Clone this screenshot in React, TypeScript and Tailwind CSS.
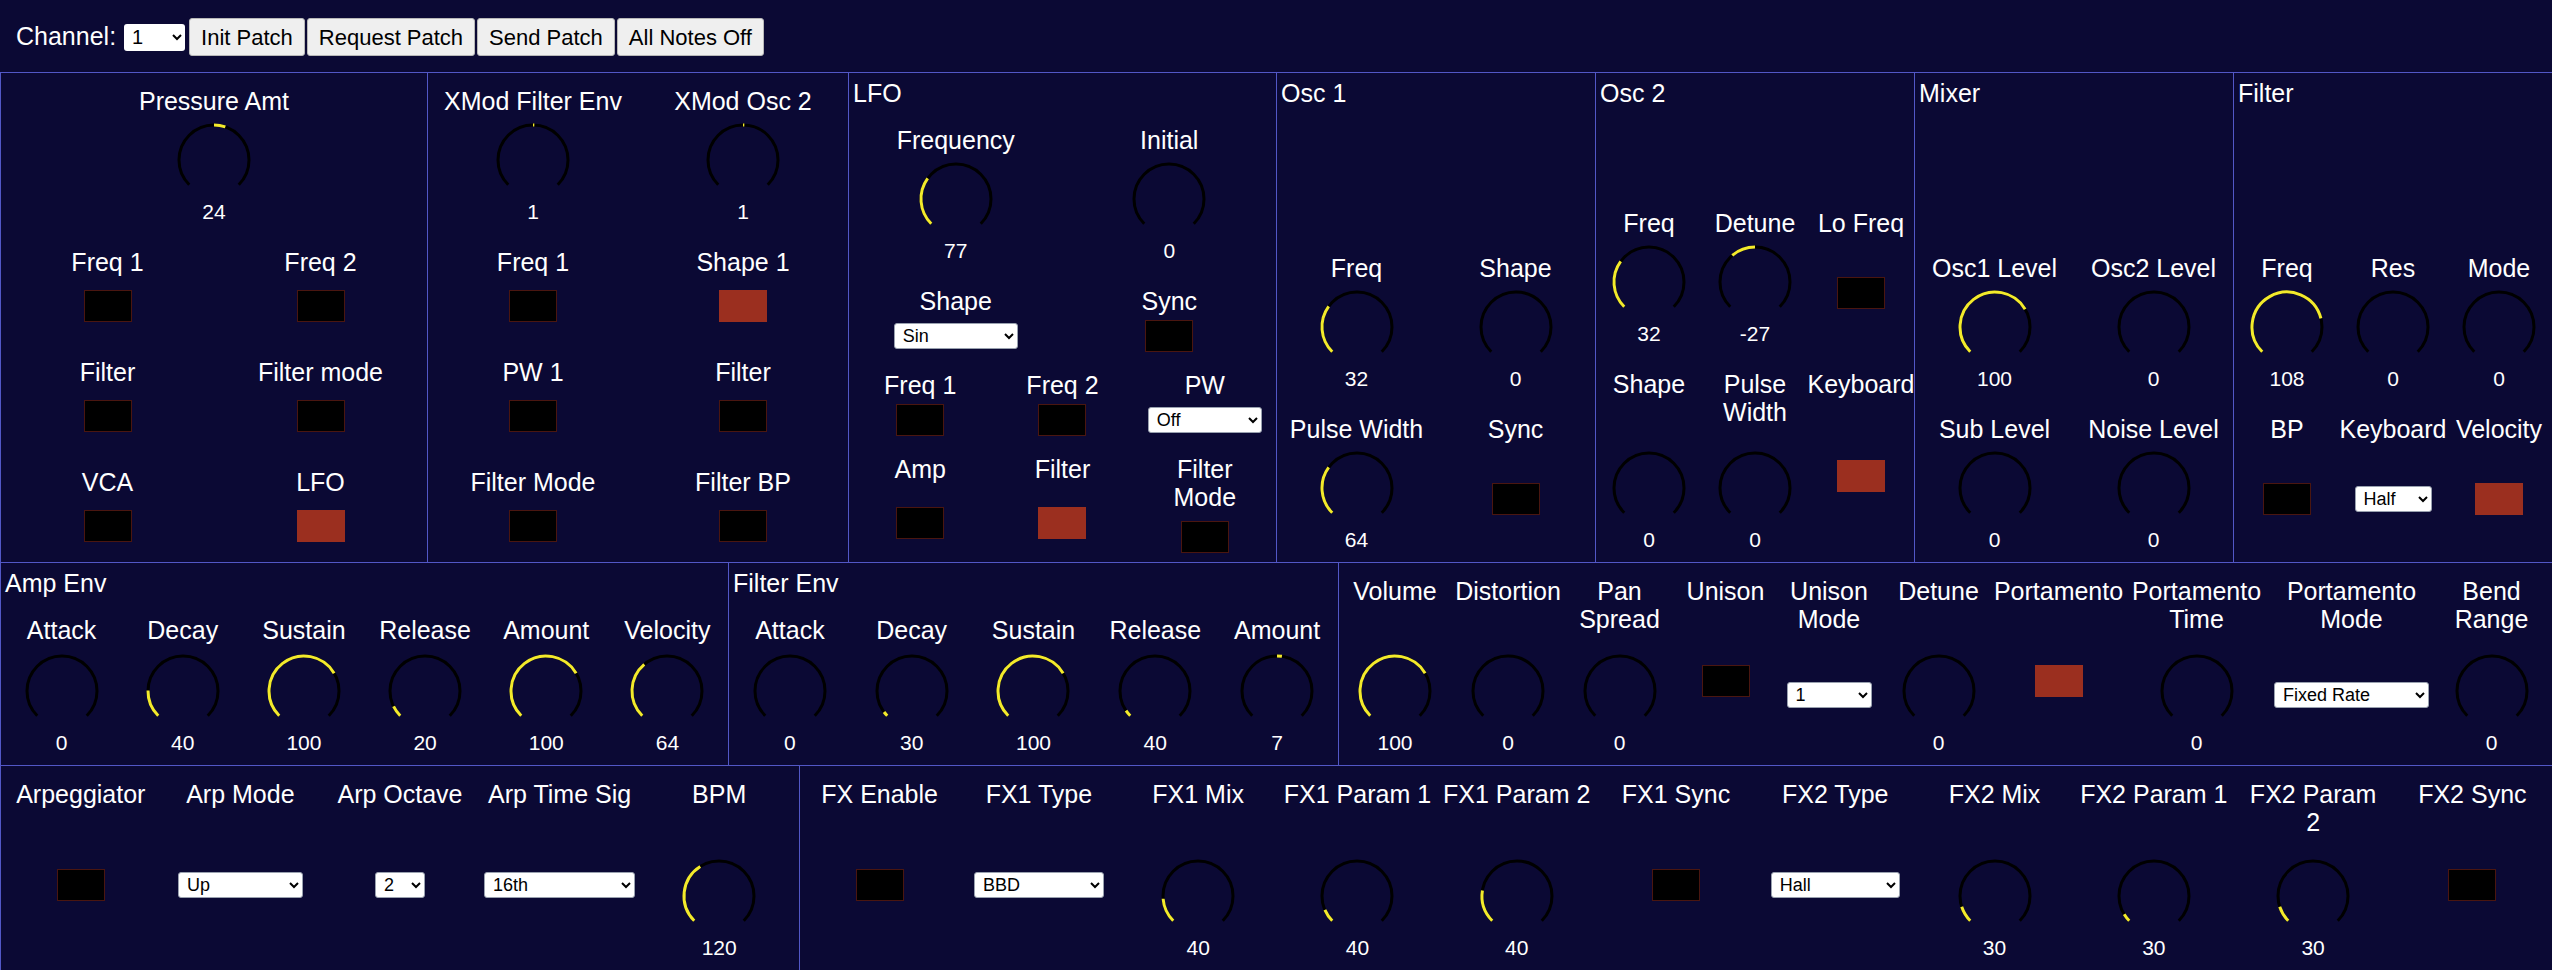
import React from "react";

type Item =
  | { t: "k"; l: string[]; v: number; f: number; bi?: boolean }
  | { t: "t"; l: string[]; on?: boolean }
  | { t: "s"; l: string[]; v: string; w: string };

interface Row { cls: string; items: Item[] }
interface Section { w: string; title?: string; bottom?: boolean; rows: Row[] }

const k = (l: string, v: number, f: number, bi = false): Item => ({ t: "k", l: l.split("|"), v, f, bi });
const tg = (l: string, on = false): Item => ({ t: "t", l: l.split("|"), on });
const sel = (l: string, v: string, w: string): Item => ({ t: "s", l: l.split("|"), v, w });

const YEL = "#f3ea2c";

function arc(a0: number, a1: number) {
  const cx = 40, cy = 38, r = 35;
  const p = (a: number) => {
    const rad = (a * Math.PI) / 180;
    return `${(cx + r * Math.sin(rad)).toFixed(2)} ${(cy - r * Math.cos(rad)).toFixed(2)}`;
  };
  const large = Math.abs(a1 - a0) > 180 ? 1 : 0;
  const sweep = a1 > a0 ? 1 : 0;
  return `M ${p(a0)} A ${r} ${r} 0 ${large} ${sweep} ${p(a1)}`;
}

function Knob({ f, bi }: { f: number; bi?: boolean }) {
  const a0 = bi ? 0 : -135;
  const a1 = a0 + f * 270;
  return (
    <svg width="80" height="68" viewBox="0 0 80 68">
      <path d={arc(-135, 135)} fill="none" stroke="#000" strokeWidth="3" />
      {Math.abs(a1 - a0) > 0.5 && <path d={arc(a0, a1)} fill="none" stroke={YEL} strokeWidth="3" />}
    </svg>
  );
}

function Toggle({ on }: { on?: boolean }) {
  return <div className={`w-[48px] h-[32px] border ${on ? "bg-[#9b2f1f] border-[#9b2f1f]" : "bg-black border-[#4a1610]"}`} />;
}

function Sel({ v, w }: { v: string; w: string }) {
  return (
    <select defaultValue={v} className={`${w} h-[26px] bg-white text-black text-[18px] leading-none rounded-[3px] border border-gray-400 px-1`}>
      <option>{v}</option>
    </select>
  );
}

function Cell({ it }: { it: Item }) {
  return (
    <div className="flex flex-col items-center pt-[14px] pb-[8px] min-w-0">
      {it.l.map((x, i) => (
        <div key={i} className="text-[25px] leading-[28px] whitespace-nowrap">{x}</div>
      ))}
      {it.t === "k" ? (
        <div className="flex-1 flex flex-col items-center justify-end">
          <Knob f={it.f} bi={it.bi} />
          <div className="text-[21px] leading-[28px] mt-[8px]">{it.v}</div>
        </div>
      ) : (
        <div className="flex-1 flex flex-col items-center justify-center">
          {it.t === "t" ? <Toggle on={it.on} /> : <Sel v={it.v} w={it.w} />}
        </div>
      )}
    </div>
  );
}

const ROW1: Section[] = [
  { w: "w-[427px]", rows: [
    { cls: "grid-cols-1 h-[161px]", items: [k("Pressure Amt", 24, 0.07, true)] },
    { cls: "grid-cols-2 h-[110px]", items: [tg("Freq 1"), tg("Freq 2")] },
    { cls: "grid-cols-2 h-[110px]", items: [tg("Filter"), tg("Filter mode")] },
    { cls: "grid-cols-2 h-[109px]", items: [tg("VCA"), tg("LFO", true)] },
  ] },
  { w: "w-[421px]", rows: [
    { cls: "grid-cols-2 h-[161px]", items: [k("XMod Filter Env", 1, 0.008, true), k("XMod Osc 2", 1, 0.008, true)] },
    { cls: "grid-cols-2 h-[110px]", items: [tg("Freq 1"), tg("Shape 1", true)] },
    { cls: "grid-cols-2 h-[110px]", items: [tg("PW 1"), tg("Filter")] },
    { cls: "grid-cols-2 h-[109px]", items: [tg("Filter Mode"), tg("Filter BP")] },
  ] },
  { w: "w-[428px]", title: "LFO", rows: [
    { cls: "grid-cols-2 h-[161px]", items: [k("Frequency", 77, 0.3), k("Initial", 0, 0)] },
    { cls: "grid-cols-2 h-[84px] [&>div]:pb-0", items: [sel("Shape", "Sin", "w-[124px]"), tg("Sync")] },
    { cls: "grid-cols-3 h-[84px] [&>div]:pb-0", items: [tg("Freq 1"), tg("Freq 2"), sel("PW", "Off", "w-[114px]")] },
    { cls: "grid-cols-3 h-[122px] [&>div]:pb-0", items: [tg("Amp"), tg("Filter", true), tg("Filter|Mode")] },
  ] },
  { w: "w-[319px]", title: "Osc 1", bottom: true, rows: [
    { cls: "grid-cols-2 h-[161px]", items: [k("Freq", 32, 0.3), k("Shape", 0, 0)] },
    { cls: "grid-cols-2 h-[161px]", items: [k("Pulse Width", 64, 0.3), tg("Sync")] },
  ] },
  { w: "w-[319px]", title: "Osc 2", bottom: true, rows: [
    { cls: "grid-cols-3 h-[161px]", items: [k("Freq", 32, 0.3), k("Detune", -27, -0.15, true), tg("Lo Freq")] },
    { cls: "grid-cols-3 h-[206px]", items: [k("Shape", 0, 0), k("Pulse|Width", 0, 0), tg("Keyboard", true)] },
  ] },
  { w: "w-[319px]", title: "Mixer", bottom: true, rows: [
    { cls: "grid-cols-2 h-[161px]", items: [k("Osc1 Level", 100, 0.72), k("Osc2 Level", 0, 0)] },
    { cls: "grid-cols-2 h-[161px]", items: [k("Sub Level", 0, 0), k("Noise Level", 0, 0)] },
  ] },
  { w: "w-[319px]", title: "Filter", bottom: true, rows: [
    { cls: "grid-cols-3 h-[161px]", items: [k("Freq", 108, 0.78), k("Res", 0, 0), k("Mode", 0, 0)] },
    { cls: "grid-cols-3 h-[161px]", items: [tg("BP"), sel("Keyboard", "Half", "w-[77px]"), tg("Velocity", true)] },
  ] },
];

const ROW2: Section[] = [
  { w: "w-[728px]", title: "Amp Env", rows: [
    { cls: "grid-cols-6 h-[163px]", items: [k("Attack", 0, 0), k("Decay", 40, 0.17), k("Sustain", 100, 0.72), k("Release", 20, 0.07), k("Amount", 100, 0.72), k("Velocity", 64, 0.35)] },
  ] },
  { w: "w-[610px]", title: "Filter Env", rows: [
    { cls: "grid-cols-5 h-[163px]", items: [k("Attack", 0, 0), k("Decay", 30, 0.03), k("Sustain", 100, 0.72), k("Release", 40, 0.04), k("Amount", 7, 0.03, true)] },
  ] },
  { w: "w-[1214px]", rows: [
    { cls: "grid-cols-[112px_114px_109px_103px_104px_115px_125px_151px_159px_121px] h-[202px]", items: [
      k("Volume", 100, 0.72), k("Distortion", 0, 0), k("Pan|Spread", 0, 0), tg("Unison"), sel("Unison|Mode", "1", "w-[85px]"),
      k("Detune", 0, 0), tg("Portamento", true), k("Portamento|Time", 0, 0), sel("Portamento|Mode", "Fixed Rate", "w-[155px]"), k("Bend|Range", 0, 0),
    ] },
  ] },
];

const ROW3: Section[] = [
  { w: "w-[799px]", rows: [
    { cls: "grid-cols-5 h-[204px]", items: [tg("Arpeggiator"), sel("Arp Mode", "Up", "w-[125px]"), sel("Arp Octave", "2", "w-[50px]"), sel("Arp Time Sig", "16th", "w-[151px]"), k("BPM", 120, 0.38)] },
  ] },
  { w: "w-[1753px]", rows: [
    { cls: "grid-cols-11 h-[204px]", items: [
      tg("FX Enable"), sel("FX1 Type", "BBD", "w-[130px]"), k("FX1 Mix", 40, 0.15), k("FX1 Param 1", 40, 0.08), k("FX1 Param 2", 40, 0.2),
      tg("FX1 Sync"), sel("FX2 Type", "Hall", "w-[129px]"), k("FX2 Mix", 30, 0.1), k("FX2 Param 1", 30, 0.05), k("FX2 Param|2", 30, 0.1), tg("FX2 Sync"),
    ] },
  ] },
];

function Sec({ s }: { s: Section }) {
  return (
    <div className={`${s.w} shrink-0 flex flex-col border-r border-b border-[#5257c6]`}>
      {s.title && <div className="h-[39px] shrink-0 pl-[4px] pt-[6px] text-[25px] leading-[28px]">{s.title}</div>}
      <div className={s.bottom ? "mt-auto" : ""}>
        {s.rows.map((r, i) => (
          <div key={i} className={`grid ${r.cls}`}>
            {r.items.map((it, j) => <Cell key={j} it={it} />)}
          </div>
        ))}
      </div>
    </div>
  );
}

export default function App() {
  return (
    <div className="w-[2552px] h-[970px] overflow-hidden bg-[#0b0934] text-white" style={{ fontFamily: "'Liberation Sans', Arial, sans-serif" }}>
      <div className="h-[72px] flex items-center pl-[16px] gap-[2px] pt-[2px]">
        <span className="text-[25px] mr-[6px]">Channel:</span>
        <select defaultValue="1" className="w-[61px] h-[27px] bg-white text-black text-[20px] rounded-[3px] px-1 mr-[2px]">
          <option>1</option>
        </select>
        {["Init Patch", "Request Patch", "Send Patch", "All Notes Off"].map(b => (
          <button key={b} className="h-[38px] px-[11px] bg-[#efefef] text-black text-[22px] border border-[#b8b8b8] rounded-[3px]">{b}</button>
        ))}
      </div>
      <div className="border-l border-t border-[#5257c6]">
        <div className="flex h-[490px]">{ROW1.map((s, i) => <Sec key={i} s={s} />)}</div>
        <div className="flex h-[203px]">{ROW2.map((s, i) => <Sec key={i} s={s} />)}</div>
        <div className="flex h-[205px]">{ROW3.map((s, i) => <Sec key={i} s={s} />)}</div>
      </div>
    </div>
  );
}
